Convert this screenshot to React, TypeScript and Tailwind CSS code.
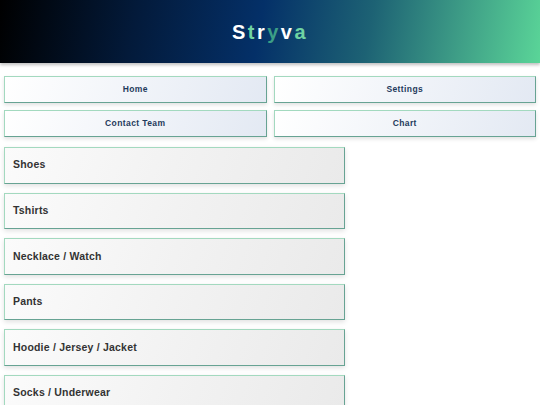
import React from "react";

const navLinks = ["Home", "Settings", "Contact Team", "Chart"];

const categories = [
  "Shoes",
  "Tshirts",
  "Necklace / Watch",
  "Pants",
  "Hoodie / Jersey / Jacket",
  "Socks / Underwear",
];

function Logo() {
  return (
    <h1 className="text-[20px] font-bold tracking-[2.5px] leading-none">
      <span className="text-white">S</span>
      <span className="text-[#6fd3a2]">t</span>
      <span className="text-white">r</span>
      <span className="text-[#3c9f86]">y</span>
      <span className="text-white">v</span>
      <span className="text-[#6fd3a2]">a</span>
    </h1>
  );
}

export default function App() {
  return (
    <div
      className="min-h-[405px] bg-white"
      style={{ fontFamily: '"Liberation Sans", Arial, sans-serif' }}
    >
      <header className="flex h-[63px] items-center justify-center bg-[linear-gradient(100deg,#000000_0%,#031a3a_25%,#043068_48%,#1d6274_68%,#3f9f87_85%,#5ad598_100%)] shadow-[0_2px_3px_rgba(0,0,0,0.25)]">
        <Logo />
      </header>

      <nav className="grid grid-cols-2 gap-x-[7px] gap-y-[7px] px-[4px] pt-[13px]">
        {navLinks.map((label) => (
          <a
            key={label}
            href="#"
            className="flex h-[27px] items-center justify-center border border-t-[#a3d9bf] border-l-[#a3d9bf] border-b-[#67a393] border-r-[#67a393] bg-[linear-gradient(110deg,#ffffff_0%,#f1f4f9_50%,#e3e9f3_100%)] text-[8.5px] font-bold tracking-[0.4px] text-[#1f3a5c] shadow-[0_2px_4px_rgba(0,0,0,0.12)]"
          >
            {label}
          </a>
        ))}
      </nav>

      <ul className="mt-[10px] flex flex-col gap-[9px] px-[4px]">
        {categories.map((name) => (
          <li
            key={name}
            className="flex h-[36.6px] w-[341px] items-center border border-t-[#a3d9bf] border-l-[#a3d9bf] border-b-[#67a393] border-r-[#67a393] bg-[linear-gradient(110deg,#fbfbfb_0%,#f2f2f2_50%,#eaeaea_100%)] pl-[8px] text-[10.5px] font-bold tracking-[0.2px] text-[#333333] shadow-[0_2px_5px_rgba(0,0,0,0.12)]"
          >
            {name}
          </li>
        ))}
      </ul>
    </div>
  );
}
